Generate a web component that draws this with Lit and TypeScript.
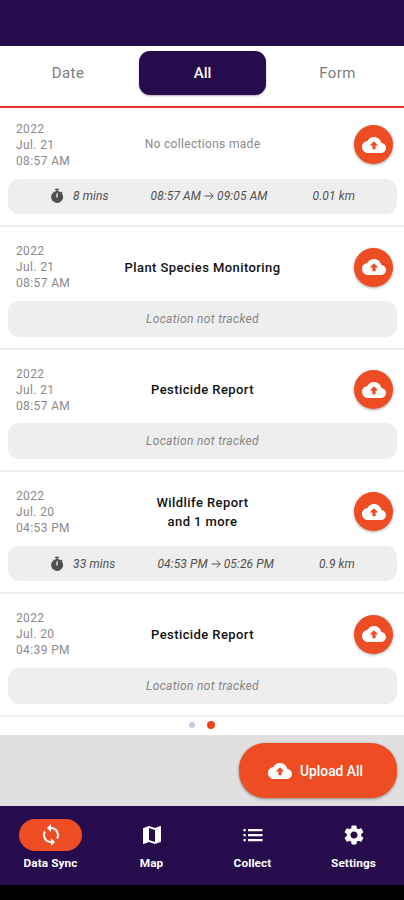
import { LitElement, html, css, svg } from "lit";
import { customElement, property } from "lit/decorators.js";
import { classMap } from "lit/directives/class-map.js";

const icons: Record<string, unknown> = {
  cloud: svg`<path fill-rule="evenodd" d="M19.35 10.04C18.67 6.59 15.64 4 12 4 9.11 4 6.6 5.64 5.35 8.04 2.34 8.36 0 10.91 0 14c0 3.31 2.69 6 6 6h13c2.76 0 5-2.24 5-5 0-2.64-2.05-4.78-4.65-4.96zM13.6 12.6v3.6h-3.2v-3.6H7.7L12 8.2l4.3 4.4z"/>`,
  timer: svg`<path fill-rule="evenodd" d="M9 1h6v2h-1.8v1.6a9 9 0 0 1 4.5 1.8l1.3-1.3 1.4 1.4-1.2 1.3A9 9 0 1 1 10.8 4.6V3H9zM11 8v5.5a1 1 0 0 0 2 0V8z"/>`,
  sync: svg`<path d="M12 4V1L8 5l4 4V6c3.31 0 6 2.69 6 6 0 1.01-.25 1.97-.7 2.8l1.46 1.46C19.54 15.03 20 13.57 20 12c0-4.42-3.58-8-8-8zm0 14c-3.31 0-6-2.69-6-6 0-1.01.25-1.97.7-2.8L5.24 7.74C4.46 8.97 4 10.43 4 12c0 4.42 3.58 8 8 8v3l4-4-4-4v3z"/>`,
  map: svg`<path fill-rule="evenodd" d="M20.5 3l-.16.03L15 5.1 9 3 3.36 4.9c-.21.07-.36.25-.36.48V20.5c0 .28.22.5.5.5l.16-.03L9 18.9l6 2.1 5.64-1.9c.21-.07.36-.25.36-.48V3.5c0-.28-.22-.5-.5-.5zM15 19l-6-2.11V5l6 2.11V19z"/>`,
  list: svg`<path d="M2.5 6h2.2v2.2H2.5zM7 6h14.5v2.2H7zM2.5 11h2.2v2.2H2.5zM7 11h14.5v2.2H7zM2.5 16h2.2v2.2H2.5zM7 16h14.5v2.2H7z"/>`,
  gear: svg`<path fill-rule="evenodd" d="M19.14 12.94c.04-.3.06-.61.06-.94 0-.32-.02-.64-.07-.94l2.03-1.58c.18-.14.23-.41.12-.61l-1.92-3.32c-.12-.22-.37-.29-.59-.22l-2.39.96c-.5-.38-1.03-.7-1.62-.94l-.36-2.54c-.04-.24-.24-.41-.48-.41h-3.84c-.24 0-.43.17-.47.41l-.36 2.54c-.59.24-1.13.57-1.62.94l-2.39-.96c-.22-.08-.47 0-.59.22L2.74 8.87c-.12.21-.08.47.12.61l2.03 1.58c-.05.3-.09.63-.09.94s.02.64.07.94l-2.03 1.58c-.18.14-.23.41-.12.61l1.92 3.32c.12.22.37.29.59.22l2.39-.96c.5.38 1.03.7 1.62.94l.36 2.54c.05.24.24.41.48.41h3.84c.24 0 .44-.17.47-.41l.36-2.54c.59-.24 1.13-.56 1.62-.94l2.39.96c.22.08.47 0 .59-.22l1.92-3.32c.12-.22.07-.47-.12-.61l-2.01-1.58zM12 15.6c-1.98 0-3.6-1.62-3.6-3.6s1.62-3.6 3.6-3.6 3.6 1.62 3.6 3.6-1.62 3.6-3.6 3.6z"/>`,
  arrow: svg`<path d="M3 12H20M13.5 5L20.5 12L13.5 19" fill="none" stroke="currentColor" stroke-width="2"/>`,
};

@customElement("app-icon")
class AppIcon extends LitElement {
  @property() name = "";
  static styles = css`
    :host { display: block; width: 24px; height: 24px; flex: none; }
    svg { display: block; width: 100%; height: 100%; fill: currentColor; }
  `;
  render() {
    return html`<svg viewBox="0 0 24 24">${icons[this.name]}</svg>`;
  }
}

interface Trip {
  day: string;
  time: string;
  title: string[];
  empty?: boolean;
  track?: { mins: string; from: string; to: string; km: string };
}

@customElement("trip-row")
class TripRow extends LitElement {
  @property({ attribute: false }) trip!: Trip;
  static styles = css`
    :host { display: block; height: 122.4px; box-sizing: border-box; padding: 16px 7px 0 8px; border-bottom: 2px solid #eeeeee; }
    .top { display: grid; grid-template-columns: 90px 1fr 90px; align-items: center; height: 48px; }
    .date { padding-left: 8px; font-size: 12px; line-height: 16px; letter-spacing: 0.38px; color: #8a8a8a; white-space: nowrap; }
    .title { text-align: center; font-size: 13px; line-height: 19px; font-weight: 500; letter-spacing: 0.42px; color: #111; white-space: nowrap; }
    .title.empty { font-weight: 400; font-size: 12px; letter-spacing: 0.32px; color: #8a8a8a; }
    .up { justify-self: end; margin-right: 4px; width: 39px; height: 39px; border-radius: 50%; background: #ee4d24; color: #fff; display: flex; align-items: center; justify-content: center; box-shadow: 0 1px 3px rgba(0, 0, 0, 0.35); }
    .bar { margin-top: 9.8px; height: 35.5px; border-radius: 11px; background: #eeeeee; display: flex; align-items: center; justify-content: center; font-size: 12px; font-style: italic; color: #858585; letter-spacing: 0.33px; white-space: nowrap; }
    .track { justify-content: space-evenly; color: #505050; letter-spacing: 0.1px; }
    .mins { display: flex; align-items: center; gap: 8px; }
    .mins app-icon { width: 16px; height: 16px; margin-left: -1px; }
    .span { display: flex; align-items: center; gap: 2px; padding-right: 3px; }
    .span app-icon { width: 12px; height: 12px; }
  `;
  render() {
    const t = this.trip;
    return html`
      <div class="top">
        <div class="date">2022<br />${t.day}<br />${t.time}</div>
        <div class=${classMap({ title: true, empty: !!t.empty })}>${t.title.map((l) => html`<div>${l}</div>`)}</div>
        <div class="up"><app-icon name="cloud"></app-icon></div>
      </div>
      ${t.track
        ? html`<div class="bar track">
            <div class="mins"><app-icon name="timer"></app-icon><span>${t.track.mins}</span></div>
            <div class="span"><span>${t.track.from}</span><app-icon name="arrow"></app-icon><span>${t.track.to}</span></div>
            <div>${t.track.km}</div>
          </div>`
        : html`<div class="bar">Location not tracked</div>`}
    `;
  }
}

const trips: Trip[] = [
  { day: "Jul. 21", time: "08:57 AM", title: ["No collections made"], empty: true, track: { mins: "8 mins", from: "08:57 AM", to: "09:05 AM", km: "0.01 km" } },
  { day: "Jul. 21", time: "08:57 AM", title: ["Plant Species Monitoring"] },
  { day: "Jul. 21", time: "08:57 AM", title: ["Pesticide Report"] },
  { day: "Jul. 20", time: "04:53 PM", title: ["Wildlife Report", "and 1 more"], track: { mins: "33 mins", from: "04:53 PM", to: "05:26 PM", km: "0.9 km" } },
  { day: "Jul. 20", time: "04:39 PM", title: ["Pesticide Report"] },
];

const nav = [
  { icon: "sync", label: "Data Sync", active: true },
  { icon: "map", label: "Map" },
  { icon: "list", label: "Collect" },
  { icon: "gear", label: "Settings" },
];

@customElement("app-root")
class AppRoot extends LitElement {
  static styles = css`
    :host { display: flex; flex-direction: column; width: 404px; height: 900px; overflow: hidden; background: #fff; font-family: Roboto, sans-serif; }
    .status { height: 46px; background: #260b4d; flex: none; }
    .tabs { height: 62px; box-sizing: border-box; flex: none; border-bottom: 2px solid #e8302d; display: grid; grid-template-columns: 139px 127px 1fr; padding-top: 5px; font-size: 15px; letter-spacing: 0.4px; color: #7c7c7c; text-align: center; line-height: 44px; }
    .tab { height: 44px; }
    .tab.first { padding-right: 3px; }
    .tab.last { padding-left: 5px; }
    .tab.on { background: #260b4d; color: #fff; border-radius: 11px; font-weight: 500; letter-spacing: 0; box-shadow: 0 1px 2px rgba(38, 11, 77, 0.35); }
    .list { flex: none; height: 608.2px; margin-top: -3.2px; }
    .dots { flex: none; height: 22px; display: flex; align-items: center; justify-content: center; gap: 12px; box-sizing: border-box; padding-top: 2px; }
    .dot { width: 6px; height: 6px; border-radius: 50%; background: #c9c6e2; }
    .dot.on { width: 8px; height: 8px; background: #ee4520; }
    .foot { flex: none; height: 71px; box-sizing: border-box; background: #e0e0e0; padding: 8px 7px 0; display: flex; justify-content: flex-end; }
    .all { box-sizing: border-box; width: 158px; height: 55px; padding-right: 5px; border-radius: 26px; background: #ee4d24; color: #fff; display: flex; align-items: center; justify-content: center; gap: 8px; font-size: 13.8px; font-weight: 500; box-shadow: 0 1px 3px rgba(0, 0, 0, 0.4); }
    .nav { flex: none; height: 79px; background: #260b4d; color: #fff; display: grid; grid-template-columns: repeat(4, 1fr); box-sizing: border-box; padding-top: 13px; }
    .item { display: flex; flex-direction: column; align-items: center; font-size: 11.8px; font-weight: 700; letter-spacing: 0.1px; line-height: 14px; gap: 5px; }
    .pill { width: 63px; height: 32px; border-radius: 16px; display: flex; align-items: center; justify-content: center; }
    .pill.on { background: #ee4d24; }
    .system { flex: 1; background: #000; }
  `;
  render() {
    return html`
      <div class="status"></div>
      <div class="tabs">
        <div class="tab first">Date</div>
        <div class="tab on">All</div>
        <div class="tab last">Form</div>
      </div>
      <div class="list">${trips.map((t) => html`<trip-row .trip=${t}></trip-row>`)}</div>
      <div class="dots"><div class="dot"></div><div class="dot on"></div></div>
      <div class="foot"><div class="all"><app-icon name="cloud"></app-icon><span>Upload All</span></div></div>
      <div class="nav">
        ${nav.map((n) => html`<div class="item"><div class=${classMap({ pill: true, on: !!n.active })}><app-icon name=${n.icon}></app-icon></div><span>${n.label}</span></div>`)}
      </div>
      <div class="system"></div>
    `;
  }
}
